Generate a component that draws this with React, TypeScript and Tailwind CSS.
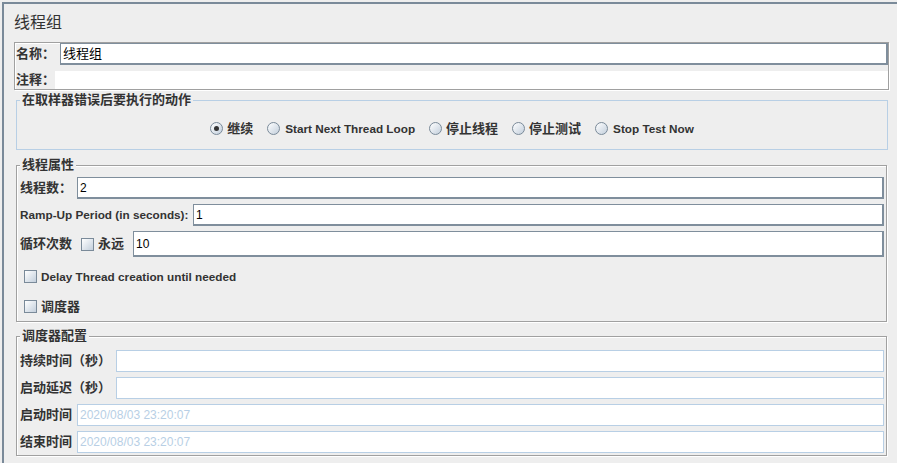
import React from "react";

function Radio({ checked }: { checked?: boolean }) {
  return (
    <span className="w-[13px] h-[13px] shrink-0 rounded-full border border-[#7a8a99] bg-linear-to-br from-white to-[#c3cfdc] flex items-center justify-center">
      {checked && <span className="w-[5px] h-[5px] rounded-full bg-[#333333]" />}
    </span>
  );
}

function CheckBox() {
  return (
    <span className="w-[13px] h-[13px] shrink-0 border border-[#7a8a99] bg-linear-to-br from-white to-[#c3cfdc]" />
  );
}

function Field({ value, disabled }: { value?: string; disabled?: boolean }) {
  return (
    <div
      className={
        disabled
          ? "flex-1 h-full bg-white border border-[#b8cfe5] pl-[2px] flex items-center text-[12px] font-normal text-[#b8cfe5]"
          : "flex-1 h-full bg-white border-t border-l border-r-2 border-b-2 border-[#7f8e9c] pl-[2px] flex items-center text-[12px] font-normal text-black"
      }
    >
      {value}
    </div>
  );
}

function Group({
  title,
  className,
  children,
}: {
  title: string;
  className: string;
  children: React.ReactNode;
}) {
  return (
    <div className={"relative " + className}>
      <span className="absolute left-[3px] top-[-9px] px-[2px] bg-[#eeeeee] text-[13px] font-bold leading-[16px] whitespace-nowrap">
        {title}
      </span>
      {children}
    </div>
  );
}

export default function App() {
  return (
    <div className="w-[897px] h-[463px] overflow-hidden bg-[#eeeeee] pt-[2px] pl-[2px] text-[#333333] font-['Liberation_Sans','Noto_Sans_CJK_SC',sans-serif]">
      <div className="h-full border-t-2 border-l-2 border-[#7a8a99] pl-[10px] pr-[8px]">
        {/* 标题 */}
        <div className="mt-[9px] h-[20px] leading-[20px] text-[16px]">线程组</div>

        {/* 名称 / 注释 */}
        <div className="mt-[9px] border border-[#a0a0a0] shadow-[1px_1px_0_#ffffff,inset_1px_1px_0_#ffffff]">
          <div className="flex h-[22px] items-center">
            <span className="w-[45px] pl-[1px] text-[13px] font-bold">名称：</span>
            <div className="flex-1 h-full bg-white border-t border-l border-r-2 border-b-2 border-[#7f8e9c] pl-[2px] flex items-center text-[13px] text-black">
              线程组
            </div>
          </div>
          <div className="mt-[6px] flex h-[18px] items-center">
            <span className="w-[40px] pl-[1px] text-[13px] font-bold">注释：</span>
            <div className="flex-1 h-full bg-white" />
          </div>
        </div>

        {/* 取样器错误 */}
        <Group
          title="在取样器错误后要执行的动作"
          className="mt-[10px] ml-[2px] mr-[1px] border border-[#b8cfe5] pt-[21px] pb-[14px]"
        >
          <div className="flex h-[13px] items-center justify-center gap-[14px] font-bold whitespace-nowrap">
            <label className="flex items-center gap-[4px]">
              <Radio checked />
              <span className="text-[13px]">继续</span>
            </label>
            <label className="flex items-center gap-[5px]">
              <Radio />
              <span className="text-[11.75px]">Start Next Thread Loop</span>
            </label>
            <label className="flex items-center gap-[4px]">
              <Radio />
              <span className="text-[13px]">停止线程</span>
            </label>
            <label className="flex items-center gap-[4px]">
              <Radio />
              <span className="text-[13px]">停止测试</span>
            </label>
            <label className="flex items-center gap-[5px]">
              <Radio />
              <span className="text-[11.75px]">Stop Test Now</span>
            </label>
          </div>
        </Group>

        {/* 线程属性 */}
        <Group
          title="线程属性"
          className="mt-[15px] ml-[2px] mr-[2px] border border-[#a0a0a0] shadow-[1px_1px_0_#ffffff,inset_1px_1px_0_#ffffff] pt-[11px] pl-[3px] pr-[2px] pb-[8px] font-bold"
        >
          <div className="flex h-[22px] items-center">
            <span className="w-[57px] shrink-0 text-[13px]">线程数：</span>
            <Field value="2" />
          </div>
          <div className="mt-[5px] flex h-[22px] items-center">
            <span className="w-[173px] shrink-0 text-[11.75px] whitespace-nowrap">Ramp-Up Period (in seconds):</span>
            <Field value="1" />
          </div>
          <div className="mt-[5px] flex h-[26px] items-center">
            <span className="w-[61px] shrink-0 text-[13px]">循环次数</span>
            <CheckBox />
            <span className="ml-[4px] w-[35px] shrink-0 text-[13px]">永远</span>
            <Field value="10" />
          </div>
          <div className="mt-[13px] flex h-[13px] items-center pl-[4px]">
            <CheckBox />
            <span className="ml-[4px] text-[11.75px]">Delay Thread creation until needed</span>
          </div>
          <div className="mt-[17px] flex h-[13px] items-center pl-[4px]">
            <CheckBox />
            <span className="ml-[4px] text-[13px]">调度器</span>
          </div>
        </Group>

        {/* 调度器配置 */}
        <Group
          title="调度器配置"
          className="mt-[14px] ml-[2px] mr-[2px] border border-[#a0a0a0] shadow-[1px_1px_0_#ffffff,inset_1px_1px_0_#ffffff] pt-[13px] pl-[3px] pr-[2px] pb-[2px] font-bold"
        >
          <div className="flex h-[22px] items-center">
            <span className="w-[96px] shrink-0 text-[13px] whitespace-nowrap">持续时间（秒）</span>
            <Field disabled />
          </div>
          <div className="mt-[5px] flex h-[22px] items-center">
            <span className="w-[96px] shrink-0 text-[13px] whitespace-nowrap">启动延迟（秒）</span>
            <Field disabled />
          </div>
          <div className="mt-[5px] flex h-[22px] items-center">
            <span className="w-[57px] shrink-0 text-[13px]">启动时间</span>
            <Field value="2020/08/03 23:20:07" disabled />
          </div>
          <div className="mt-[5px] flex h-[22px] items-center">
            <span className="w-[57px] shrink-0 text-[13px]">结束时间</span>
            <Field value="2020/08/03 23:20:07" disabled />
          </div>
        </Group>
      </div>
    </div>
  );
}
